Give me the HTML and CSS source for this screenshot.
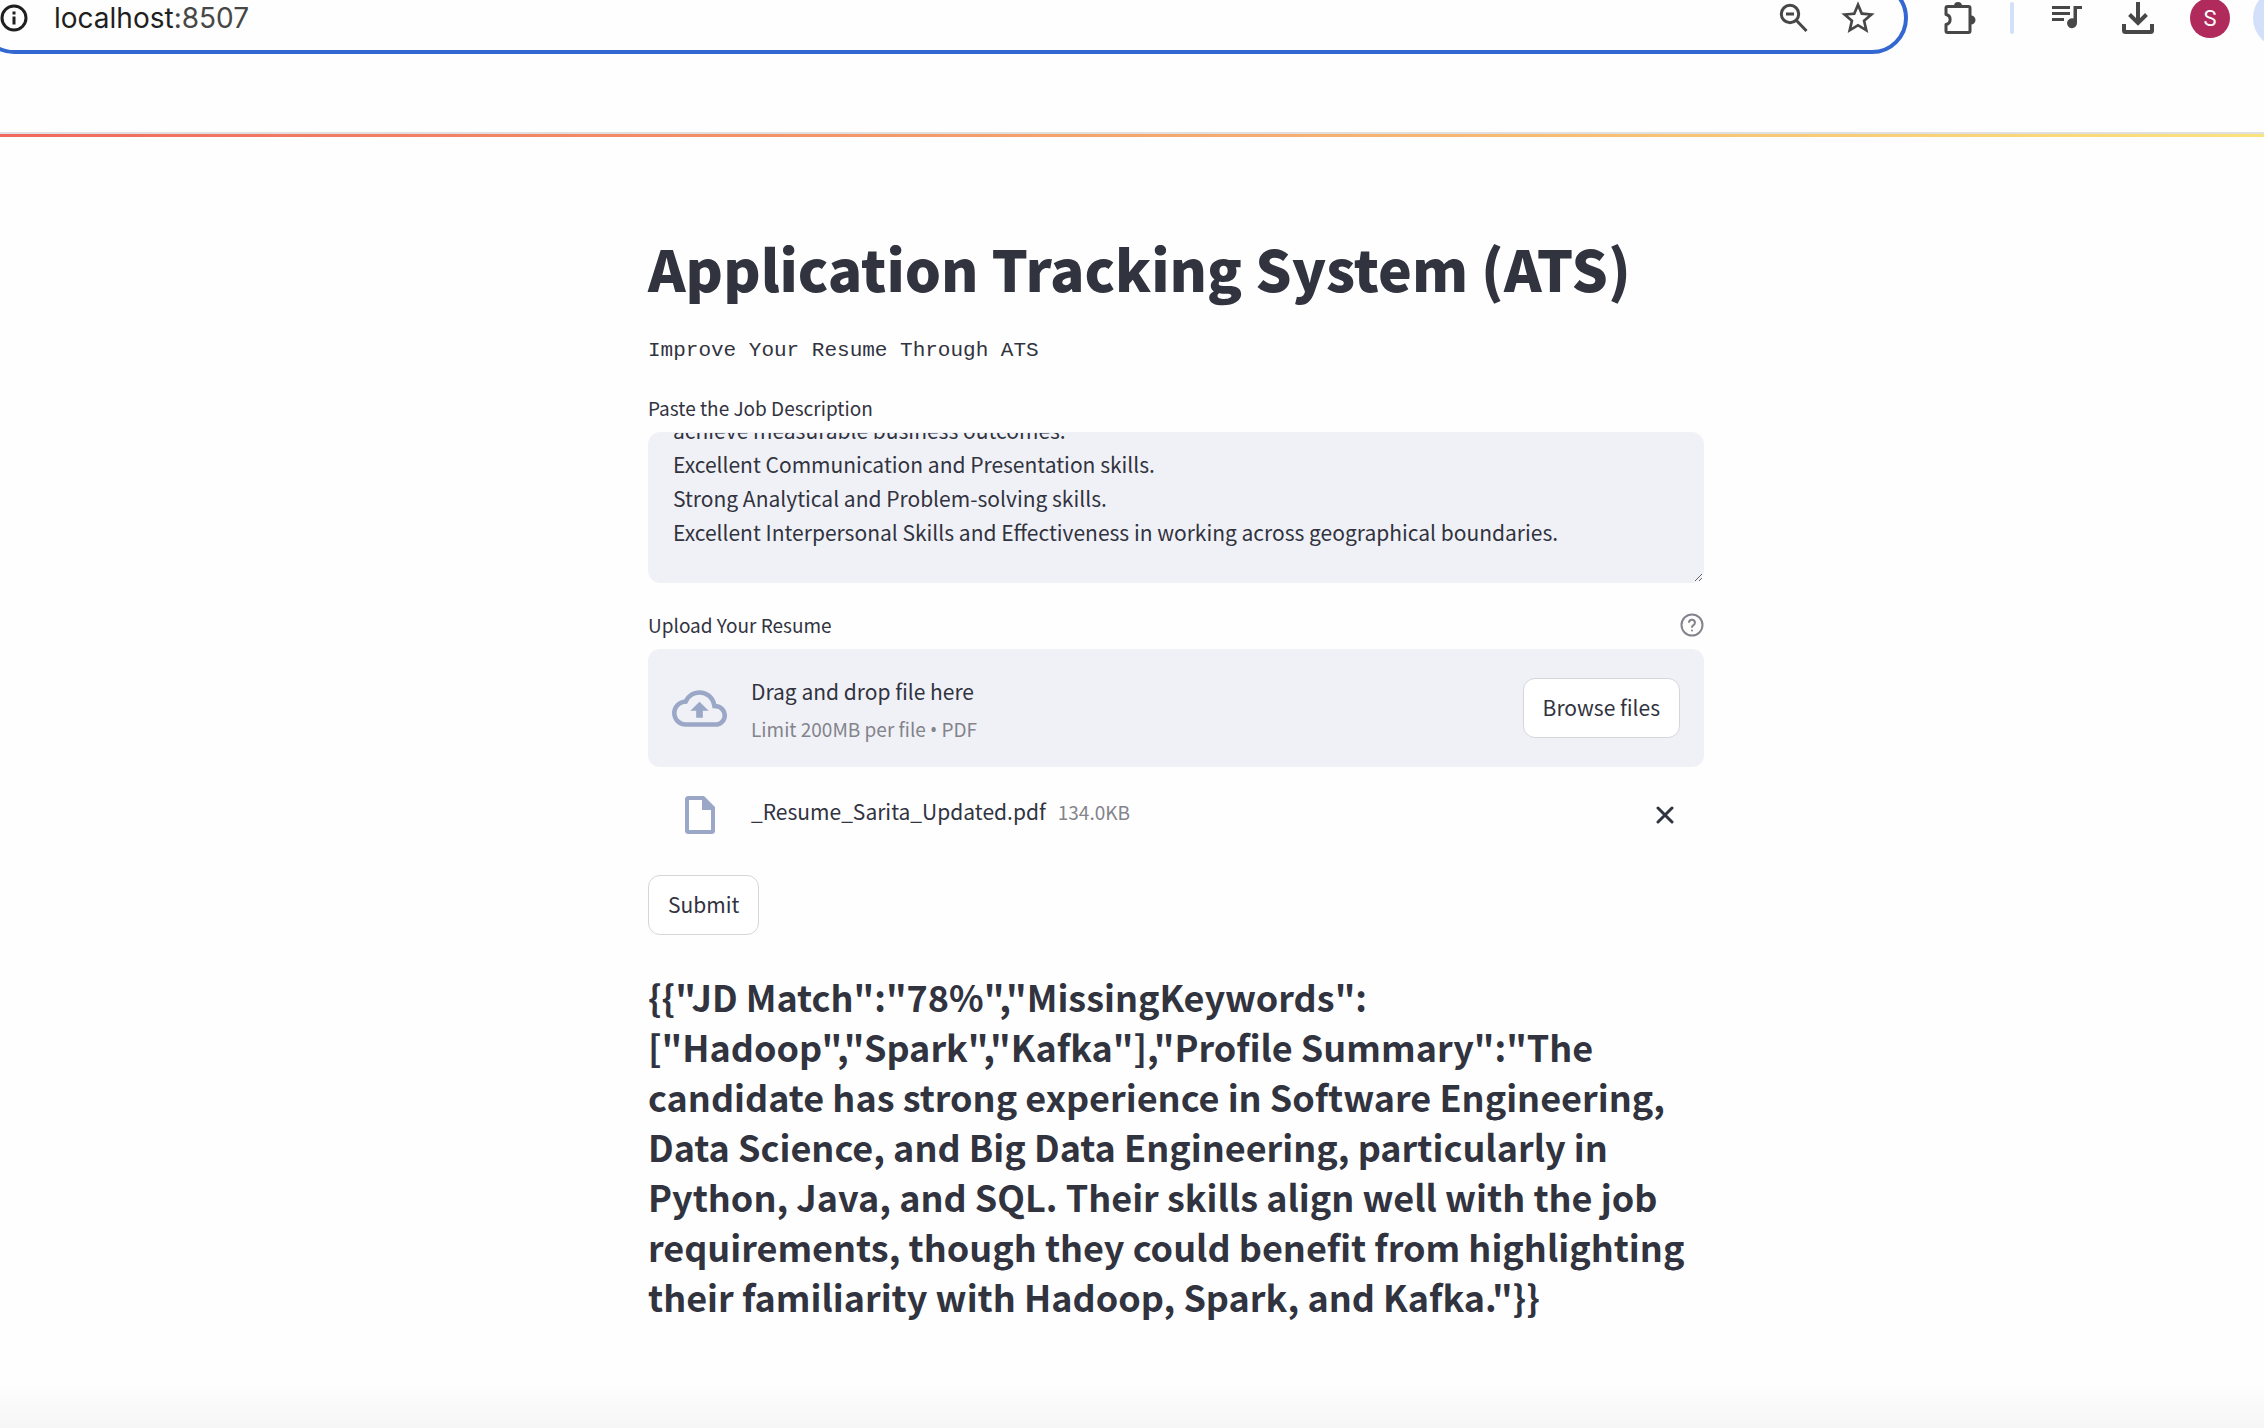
FILE: index.html
```html
<!DOCTYPE html>
<html lang="en">
<head>
<meta charset="utf-8">
<meta name="viewport" content="width=device-width, initial-scale=1">
<title>Application Tracking System (ATS)</title>
<link rel="stylesheet" href="styles.css">
</head>
<body>
<header class="toolbar">
  <div class="address-bar">
    <svg class="icon info" viewBox="0 0 28 28" aria-hidden="true"><circle cx="14" cy="14" r="12" fill="none" stroke="currentColor" stroke-width="3"/><path d="M12.500 12.500h3v8h-3zM12.500 7.500h3v3h-3z" fill="currentColor"/></svg>
    <div class="url">localhost<span class="port">:8507</span></div>
    <button class="tool" aria-label="Zoom out">
      <svg class="icon" viewBox="0 0 32 32"><g fill="none" stroke="currentColor" stroke-width="3"><circle cx="12" cy="12" r="8.700"/><path d="M18 18l10.500 11M8 12h8"/></g></svg>
    </button>
    <button class="tool" aria-label="Bookmark this page">
      <svg class="icon star" viewBox="0 0 24 24"><path fill="currentColor" d="M22 9.240l-7.190-.62L12 2 9.190 8.630 2 9.240l5.460 4.730L5.820 21 12 17.270 18.180 21l-1.630-7.030L22 9.240zM12 15.400l-3.760 2.270 1-4.280-3.320-2.880 4.380-.38L12 6.100l1.710 4.040 4.380.38-3.320 2.880 1 4.280L12 15.400z"/></svg>
    </button>
  </div>
  <button class="tool puzzle" aria-label="Extensions">
    <svg class="icon" viewBox="0 0 32 32"><path d="M3.500 4.500h21A1.500 1.500 0 0 1 26 6v23a1.500 1.500 0 0 1-1.500 1.500h-21A1.500 1.500 0 0 1 2 29v-6.500c5.500-1 5.500-9 0-10V6a1.500 1.500 0 0 1 1.500-1.500z" fill="none" stroke="currentColor" stroke-width="3" stroke-linejoin="round"/><path d="M10 4a4 4 0 0 1 8 0zM27 13.500a4.500 4.500 0 0 1 0 9z" fill="currentColor"/></svg>
  </button>
  <span class="divider"></span>
  <button class="tool music" aria-label="Media controls">
    <svg class="icon" viewBox="0 0 32 32"><path fill="currentColor" d="M1 4h18v3H1zM1 10h18v3H1zM1 16h12v3H1zM22.500 4H31v3h-5v14a5 5 0 1 1-3.500-4.600z"/></svg>
  </button>
  <button class="tool download" aria-label="Downloads">
    <svg class="icon" viewBox="0 0 32 32"><path d="M16 0v20M7.500 12.500l8.500 8.500 8.500-8.500" fill="none" stroke="currentColor" stroke-width="4"/><path d="M2 22v6.500a1.500 1.500 0 0 0 1.500 1.500h25a1.500 1.500 0 0 0 1.500-1.500V22" fill="none" stroke="currentColor" stroke-width="4"/></svg>
  </button>
  <button class="avatar" aria-label="Profile">S</button>
  <span class="update-pill"></span>
</header>
<div class="decoration"></div>

<main class="page">
  <h1 class="title">Application Tracking System (ATS)</h1>
  <p class="subtitle">Improve Your Resume Through ATS</p>

  <form class="form">
    <label class="label" for="jd">Paste the Job Description</label>
    <textarea class="textarea" id="jd">achieve measurable business outcomes.
Excellent Communication and Presentation skills.
Strong Analytical and Problem-solving skills.
Excellent Interpersonal Skills and Effectiveness in working across geographical boundaries.</textarea>

    <div class="label-row">
      <span class="label" id="upload-label">Upload Your Resume</span>
      <svg class="help" viewBox="0 0 24 24" fill="none" stroke="currentColor" stroke-width="2" stroke-linecap="round" stroke-linejoin="round" aria-hidden="true"><circle cx="12" cy="12" r="10.500"/><path d="M9 9a3 3 0 0 1 5.900 1c0 2-2.900 2.600-2.900 4M12 17.500v.1"/></svg>
    </div>
    <section class="dropzone" aria-labelledby="upload-label">
      <svg class="cloud" viewBox="0 0 24 24" aria-hidden="true"><path fill="currentColor" d="M19.350 10.040A7.490 7.490 0 0 0 12 4C9.110 4 6.600 5.640 5.350 8.040A5.994 5.994 0 0 0 0 14c0 3.310 2.690 6 6 6h13c2.760 0 5-2.240 5-5 0-2.640-2.050-4.780-4.650-4.960zM19 18H6c-2.210 0-4-1.790-4-4 0-2.050 1.530-3.760 3.560-3.970l1.070-.11.500-.95A5.469 5.469 0 0 1 12 6c2.620 0 4.880 1.860 5.390 4.430l.300 1.500 1.530.11A2.980 2.980 0 0 1 22 15c0 1.650-1.350 3-3 3zM8 13h2.550v3h2.900v-3H16l-4-4z"/></svg>
      <div class="drop-text">
        <span>Drag and drop file here</span>
        <span class="small">Limit 200MB per file <span class="bullet">•</span> PDF</span>
      </div>
      <button class="button" type="button">Browse files</button>
    </section>
    <div class="file">
      <svg class="file-icon" viewBox="0 0 30 38" aria-hidden="true"><path fill="currentColor" fill-rule="evenodd" d="M3.500 0H19l11 11v23.500a3.500 3.500 0 0 1-3.500 3.500h-23A3.500 3.500 0 0 1 0 34.500v-31A3.500 3.500 0 0 1 3.500 0zM4 4v30h22V14h-9V4z"/></svg>
      <div class="file-info">
        <span class="file-name">_Resume_Sarita_Updated.pdf</span>
        <span class="small">134.0KB</span>
      </div>
      <button class="remove" type="button" aria-label="Remove file">
        <svg viewBox="0 0 18 18" fill="none" stroke="currentColor" stroke-width="3" stroke-linecap="round"><path d="M2 2l14 14M16 2L2 16"/></svg>
      </button>
    </div>
    <button class="button submit" type="button">Submit</button>
  </form>

  <h3 class="result">{{"JD Match":"78%","MissingKeywords":<wbr>["Hadoop","Spark","Kafka"],"Profile Summary":"The candidate has strong experience in Software Engineering, Data Science, and Big Data Engineering, particularly in Python, Java, and SQL. Their skills align well with the job requirements, though they could benefit from highlighting their familiarity with Hadoop, Spark, and Kafka."}}</h3>
</main>
<footer class="fade"></footer>
<script src="script.js"></script>
</body>
</html>
```
FILE: styles.css
```css
* {
  box-sizing: border-box;
}

body {
  margin: 0;
  min-height: 100vh;
  display: flex;
  flex-direction: column;
  overflow-x: hidden;
  background: #fefefe;
  color: #31333f;
  font-family: "Noto Sans CJK SC", "Noto Sans", sans-serif;
  font-size: 21px;
}

button {
  font: inherit;
  color: inherit;
  cursor: pointer;
}

/* Browser toolbar */
.toolbar {
  display: flex;
  align-items: center;
  height: 132px;
  padding-bottom: 96px;
  overflow: hidden;
  color: #474747;
}

.address-bar {
  flex: 1;
  display: flex;
  align-items: center;
  height: 72px;
  margin-left: -22px;
  padding: 0 26px 0 18px;
  border: 4px solid #3367d1;
  border-radius: 36px;
}

.icon {
  display: block;
  width: 32px;
  height: 32px;
}

.info {
  width: 28px;
  height: 28px;
  color: #1f1f1f;
}

.star {
  width: 40px;
  height: 40px;
}

.url {
  flex: 1;
  margin-left: 26px;
  color: #1f1f1f;
  font-family: Inter, "Liberation Sans", sans-serif;
  font-size: 28px;
}

.port {
  color: #474747;
}

.tool {
  flex: none;
  padding: 0;
  border: 0;
  background: none;
}

.address-bar .tool + .tool {
  margin-left: 28px;
}

.puzzle {
  margin-left: 36px;
}

.divider {
  flex: none;
  width: 4px;
  height: 32px;
  margin-left: 34px;
  border-radius: 2px;
  background: #d3e0fa;
}

.music {
  margin-left: 37px;
}

.download {
  margin-left: 39px;
}

.avatar {
  flex: none;
  width: 40px;
  height: 40px;
  margin-left: 36px;
  padding: 0;
  border: 0;
  border-radius: 50%;
  background: #b02a5b;
  color: #fff;
  font-family: Roboto, sans-serif;
  font-size: 22px;
}

.update-pill {
  flex: none;
  width: 60px;
  height: 60px;
  margin: 0 -49px 0 23px;
  border-radius: 30px;
  background: #d3e0fa;
}

.decoration {
  height: 5px;
  border-top: 2px solid #e0e0e0;
  background: linear-gradient(90deg, #f0695e, #fae37d);
}

/* App */
.page {
  flex: 1;
  width: 100%;
  max-width: 1144px;
  margin: 0 auto;
  padding: 90px 0 0 88px;
}

.title {
  margin: 0;
  font-size: 57px;
  line-height: 80px;
  font-weight: 900;
}

.subtitle {
  margin: 27px 0 0;
  font-family: "Liberation Mono", monospace;
  font-size: 21px;
  line-height: 34px;
}

.form {
  display: flex;
  flex-direction: column;
}

.label {
  font-size: 19px;
  line-height: 32px;
}

.form > .label {
  margin-top: 24px;
}

.textarea {
  width: 100%;
  height: 151px;
  margin-top: 8px;
  padding: 24px 24px 33px;
  border: 1px solid #f0f1f6;
  border-radius: 12px;
  background: #f0f1f6;
  color: inherit;
  font: inherit;
  line-height: 34px;
  resize: vertical;
  scrollbar-width: none;
}

.label-row {
  display: flex;
  align-items: center;
  justify-content: space-between;
  margin-top: 26px;
}

.help {
  width: 24px;
  height: 24px;
  color: #83848c;
}

.dropzone {
  display: flex;
  align-items: center;
  height: 118px;
  margin-top: 8px;
  padding: 0 24px;
  border-radius: 12px;
  background: #f0f1f6;
}

.cloud {
  width: 55px;
  height: 55px;
  color: #9ba7c6;
}

.drop-text {
  flex: 1;
  display: flex;
  flex-direction: column;
  margin: 4px 0 0 24px;
  line-height: 38px;
}

.small {
  color: #83848c;
  font-size: 19px;
}

.bullet {
  font-family: "Noto Sans", sans-serif;
}

.button {
  height: 60px;
  padding: 0 19px 2px;
  border: 1px solid #d5d6d9;
  border-radius: 12px;
  background: #fff;
}

.file {
  display: flex;
  align-items: center;
  height: 60px;
  margin-top: 18px;
  padding: 0 30px 0 37px;
}

.file-icon {
  width: 30px;
  height: 38px;
  color: #9ba7c6;
}

.file-info {
  display: flex;
  flex: 1;
  align-items: baseline;
  gap: 12px;
  margin-left: 36px;
  padding-bottom: 8px;
}

.remove {
  width: 18px;
  height: 18px;
  padding: 0;
  border: 0;
  background: none;
}

.remove svg {
  display: block;
}

.submit {
  align-self: flex-start;
  margin-top: 30px;
}

.result {
  margin: 36px 0 0;
  font-size: 36px;
  line-height: 50px;
  font-weight: 700;
}

.fade {
  height: 48px;
  background: linear-gradient(#fefefe, #f6f6f6);
}
```
FILE: script.js
```js
// Keep the end of the pasted description in view.
const description = document.getElementById("jd");
description.scrollTop = description.scrollHeight;
```
